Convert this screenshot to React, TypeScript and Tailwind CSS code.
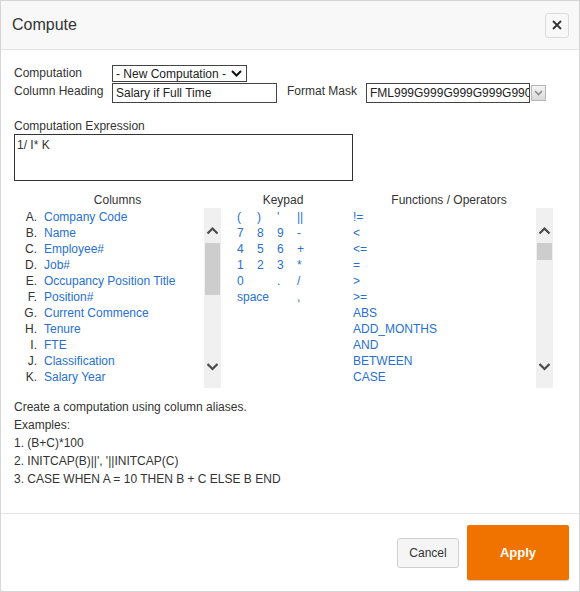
import React from "react";

const columns = [
  { key: "A", name: "Company Code" },
  { key: "B", name: "Name" },
  { key: "C", name: "Employee#" },
  { key: "D", name: "Job#" },
  { key: "E", name: "Occupancy Position Title" },
  { key: "F", name: "Position#" },
  { key: "G", name: "Current Commence" },
  { key: "H", name: "Tenure" },
  { key: "I", name: "FTE" },
  { key: "J", name: "Classification" },
  { key: "K", name: "Salary Year" },
  { key: "L", name: "Location" },
];

const keypad = [
  ["(", ")", "'", "||"],
  ["7", "8", "9", "-"],
  ["4", "5", "6", "+"],
  ["1", "2", "3", "*"],
  ["0", "", ".", "/"],
];

const functions = [
  "!=", "<", "<=", "=", ">", ">=", "ABS", "ADD_MONTHS", "AND", "BETWEEN", "CASE", "CEIL",
];

const examples = [
  "1. (B+C)*100",
  "2. INITCAP(B)||', '||INITCAP(C)",
  "3. CASE WHEN A = 10 THEN B + C ELSE B END",
];

// old-style scrollbar: grey track, arrows and a thumb
function Scrollbar({ thumbTop, thumbHeight }: { thumbTop: number; thumbHeight: number }) {
  return (
    <svg width="17" height="180" viewBox="0 0 17 180" className="shrink-0 block">
      <rect width="17" height="180" fill="#f0f0f0" />
      <path d="M3.5 25.5 L8.5 20.5 L13.5 25.5" stroke="#4a4a4a" strokeWidth="2.2" fill="none" />
      <rect x="1" y={thumbTop} width="15" height={thumbHeight} fill="#cdcdcd" />
      <path d="M3.5 156 L8.5 161 L13.5 156" stroke="#4a4a4a" strokeWidth="2.2" fill="none" />
    </svg>
  );
}

export default function App() {
  return (
    <div className="w-[580px] h-[592px] bg-white border border-[#d6d6d6] flex flex-col font-['Liberation_Sans',Arial,sans-serif] text-[12px] text-[#333]">
      {/* Header */}
      <div className="h-[49px] shrink-0 bg-[#f8f8f8] border-b border-[#e3e3e3] flex items-center justify-between pl-[11px] pr-[10px]">
        <h2 className="text-[16px] text-[#333]">Compute</h2>
        <button className="w-[24px] h-[25px] rounded-[3px] border border-[#dcdcdc] bg-[#f8f8f8] flex items-center justify-center">
          <svg width="10" height="10" viewBox="0 0 10 10">
            <path d="M1 1 L9 9 M9 1 L1 9" stroke="#333" strokeWidth="1.8" />
          </svg>
        </button>
      </div>

      {/* Body */}
      <div className="flex-1 pt-[15px] px-[13px]">
        <div className="flex items-start">
          <span className="w-[98px] leading-[16px]">Computation</span>
          <div className="w-[135px] h-[17px] border border-[#444] flex items-center justify-between pl-[3px] pr-[4px] text-[#222]">
            <span className="leading-[14px]">- New Computation -</span>
            <svg width="11" height="7" viewBox="0 0 11 7">
              <path d="M1 1 L5.5 5.5 L10 1" stroke="#111" strokeWidth="2" fill="none" />
            </svg>
          </div>
        </div>

        <div className="flex items-start mt-px">
          <span className="w-[98px] leading-[16px]">Column Heading</span>
          <div className="w-[165px] h-[20px] border border-[#444] pl-[3px] leading-[18px] text-[#222]">Salary if Full Time</div>
          <span className="ml-[10px] w-[79px] leading-[16px]">Format Mask</span>
          <div className="w-[164px] h-[20px] border border-[#444] pl-[3px] leading-[18px] text-[#222] overflow-hidden whitespace-nowrap">
            FML999G999G999G999G990D00
          </div>
          <div className="ml-[1px] mt-[2px] w-[15px] h-[16px] border border-[#b5b5b5] bg-gradient-to-b from-[#f4f4f4] to-[#d9d9d9] flex items-center justify-center">
            <svg width="9" height="6" viewBox="0 0 9 6">
              <path d="M1 1 L4.5 4.5 L8 1" stroke="#8a8a8a" strokeWidth="1.6" fill="none" />
            </svg>
          </div>
        </div>

        <div className="mt-[15px] leading-[16px]">Computation Expression</div>
        <div className="w-[339px] h-[47px] border border-[#333] pl-[2px] pt-[2px] leading-[16px]">1/ I* K</div>

        {/* Pickers */}
        <div className="mt-[11px] flex">
          <div className="w-[207px]">
            <div className="text-center leading-[16px]">Columns</div>
            <div className="h-[180px] flex">
              <div className="flex-1 overflow-hidden pt-px">
                {columns.map((c) => (
                  <div key={c.key} className="h-[16px] leading-[16px] flex whitespace-nowrap">
                    <span className="w-[23px] text-right">{c.key}.</span>
                    <span className="ml-[7px] text-[#2870cf]">{c.name}</span>
                  </div>
                ))}
              </div>
              <Scrollbar thumbTop={35} thumbHeight={52} />
            </div>
          </div>

          <div className="w-[124px]">
            <div className="text-center leading-[16px]">Keypad</div>
            <div className="pt-px pl-[16px] grid grid-cols-[20px_20px_20px_20px] text-[#2870cf]">
              {keypad.flat().map((k, i) => (
                <span key={i} className="h-[16px] leading-[16px]">{k}</span>
              ))}
              <span className="col-span-3 h-[16px] leading-[16px]">space</span>
              <span className="h-[16px] leading-[16px]">,</span>
            </div>
          </div>

          <div className="w-[208px]">
            <div className="text-center leading-[16px]">Functions / Operators</div>
            <div className="h-[180px] flex">
              <div className="flex-1 overflow-hidden pt-px pl-[8px] text-[#2870cf]">
                {functions.map((f) => (
                  <div key={f} className="h-[16px] leading-[16px]">{f}</div>
                ))}
              </div>
              <Scrollbar thumbTop={35} thumbHeight={17} />
            </div>
          </div>
        </div>

        {/* Help */}
        <div className="mt-[10px] leading-[18px]">
          <p>Create a computation using column aliases.</p>
          <p>Examples:</p>
          {examples.map((e) => (
            <p key={e}>{e}</p>
          ))}
        </div>
      </div>

      {/* Footer */}
      <div className="h-[78px] shrink-0 border-t border-[#e5e5e5] flex items-center justify-end gap-[8px] pr-[10px]">
        <button className="w-[62px] h-[30px] rounded-[3px] border border-[#cfcfcf] bg-[#f5f5f5] text-[12px] text-[#333]">
          Cancel
        </button>
        <button className="w-[102px] h-[55px] rounded-[2px] bg-[#f07300] text-white text-[13px] font-bold shadow-[0_1px_1px_rgba(0,0,0,0.2)]">
          Apply
        </button>
      </div>
    </div>
  );
}
